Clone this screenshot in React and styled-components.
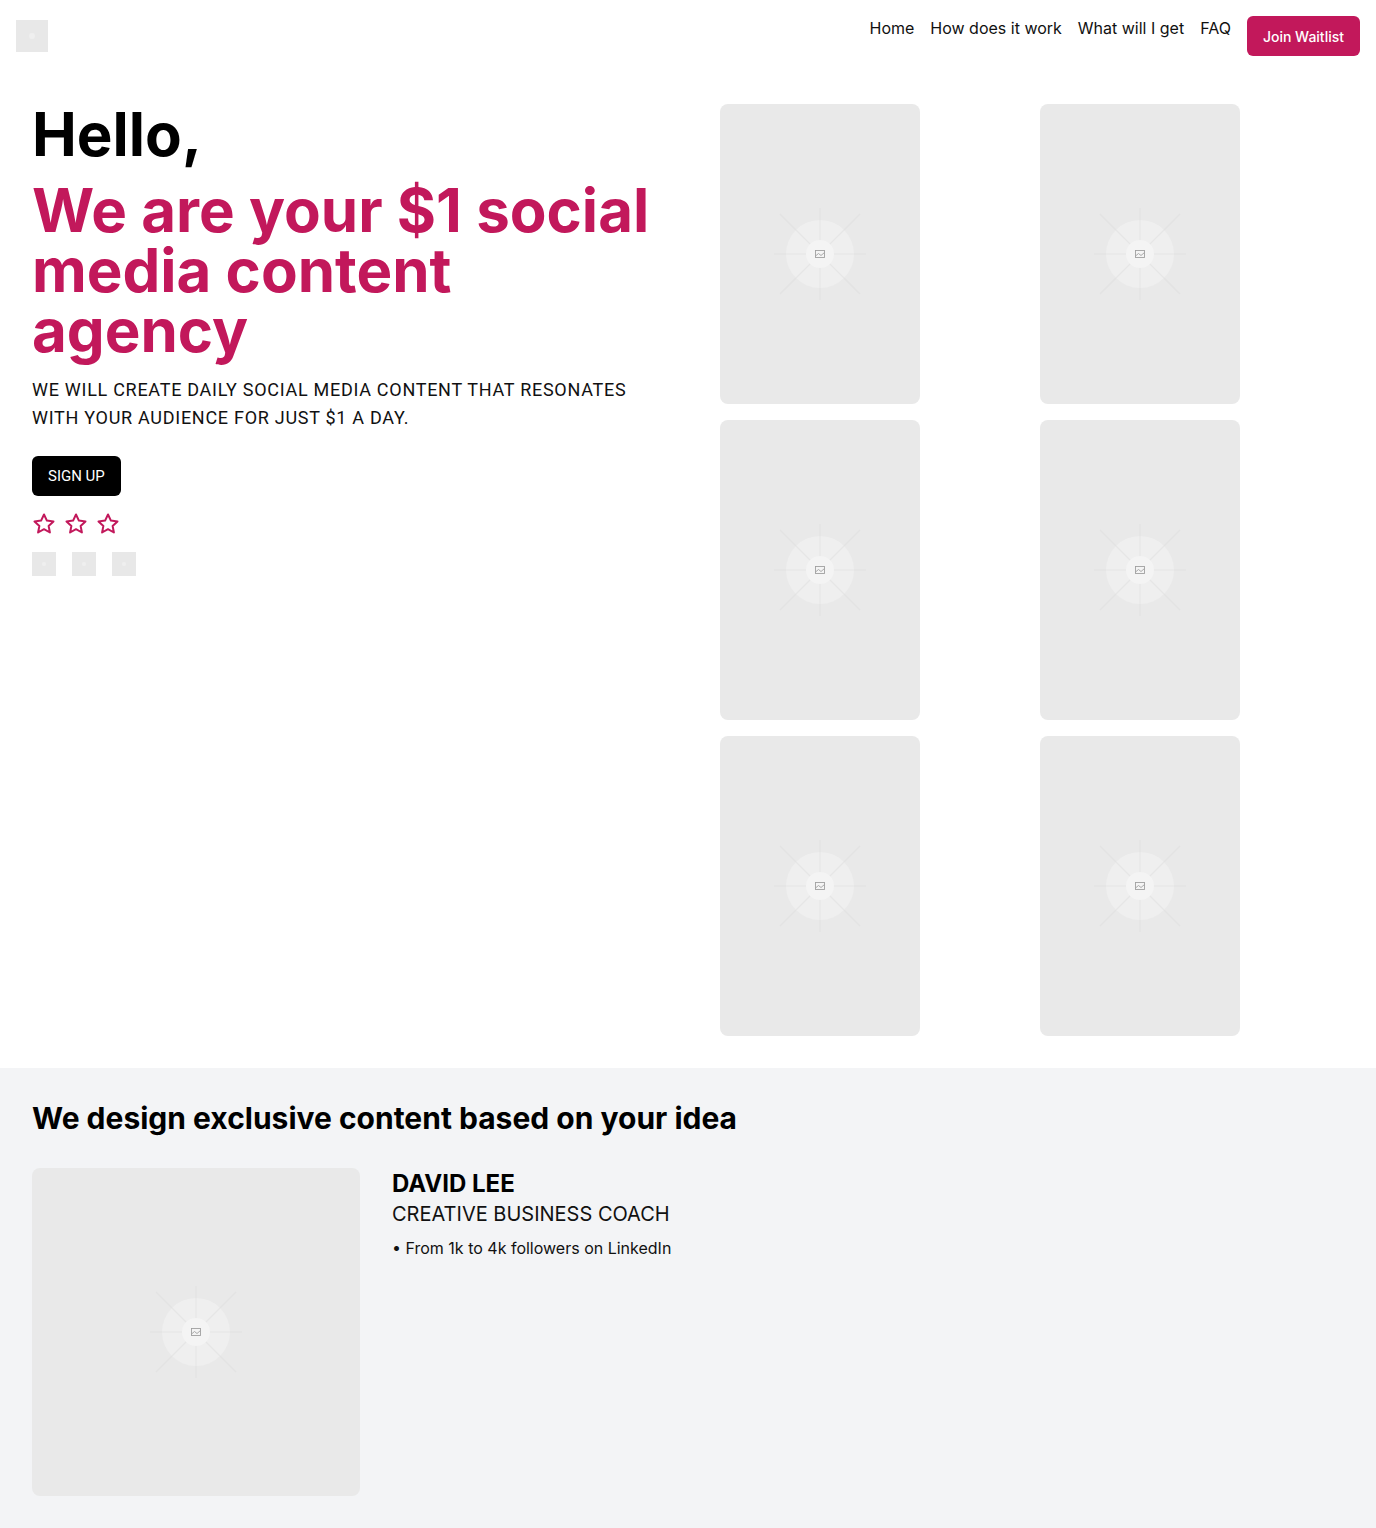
import React from "react";
import styled, { createGlobalStyle } from "styled-components";

const Global = createGlobalStyle`
  * { box-sizing: border-box; }
  html, body { margin: 0; padding: 0; background: #fff; }
  body { font-family: Inter, "Noto Sans", sans-serif; color: #111; }
`;

const PINK = "#C2185B";

const Page = styled.div`
  width: 1376px;
  min-height: 1528px;
  display: flex;
  flex-direction: column;
`;

const Nav = styled.header`
  height: 72px;
  padding: 16px;
  display: flex;
  justify-content: space-between;
  align-items: flex-start;
`;

const Logo = styled.div`
  width: 32px;
  height: 32px;
  margin-top: 4px;
  background: #e8e8e8;
  display: flex;
  align-items: center;
  justify-content: center;
  &::after {
    content: "";
    width: 6px;
    height: 6px;
    border-radius: 50%;
    background: #efefef;
  }
`;

const NavRight = styled.nav`
  display: flex;
  align-items: flex-start;
  gap: 16px;
`;

const NavLink = styled.a`
  font-size: 16px;
  line-height: 24px;
  color: #111;
  text-decoration: none;
`;

const PinkButton = styled.button`
  height: 40px;
  padding: 0 16px;
  border: none;
  border-radius: 6px;
  background: ${PINK};
  color: #fff;
  font-family: Inter, sans-serif;
  font-size: 14px;
  font-weight: 500;
`;

const Hero = styled.section`
  display: grid;
  grid-template-columns: 640px 1fr;
  column-gap: 48px;
  padding: 32px;
`;

const Left = styled.div`
  display: flex;
  flex-direction: column;
  align-items: flex-start;
`;

const Hello = styled.h1`
  margin: 0;
  font-size: 60px;
  line-height: 60px;
  font-weight: 700;
  color: #000;
`;

const Headline = styled.h2`
  margin: 16px 0 0;
  max-width: 630px;
  font-size: 60px;
  line-height: 60px;
  font-weight: 700;
  color: ${PINK};
`;

const Sub = styled.p`
  margin: 16px 0 0;
  font-family: Roboto, sans-serif;
  font-size: 18px;
  line-height: 28px;
  letter-spacing: 0.04em;
  color: #111;
  max-width: 630px;
`;

const BlackButton = styled.button`
  margin-top: 24px;
  height: 40px;
  padding: 0 16px;
  border: none;
  border-radius: 6px;
  background: #000;
  color: #fff;
  font-family: Roboto, sans-serif;
  font-size: 15px;
`;

const Stars = styled.div`
  margin-top: 16px;
  display: flex;
  gap: 8px;
`;

const Squares = styled.div`
  margin-top: 16px;
  display: flex;
  gap: 16px;
`;

const Square = styled.div`
  width: 24px;
  height: 24px;
  background: #e8e8e8;
  display: flex;
  align-items: center;
  justify-content: center;
  &::after {
    content: "";
    width: 4px;
    height: 4px;
    border-radius: 50%;
    background: #efefef;
  }
`;

const ImageGrid = styled.div`
  display: grid;
  grid-template-columns: repeat(2, 200px);
  grid-auto-rows: 300px;
  column-gap: 120px;
  row-gap: 16px;
`;

const Card = styled.div`
  width: ${(p) => p.$w}px;
  height: ${(p) => p.$h}px;
  border-radius: 8px;
  background: #e9e9e9;
  display: flex;
  align-items: center;
  justify-content: center;
  overflow: hidden;
`;

const Section = styled.section`
  flex: 1;
  background: #f3f4f6;
  padding: 32px;
`;

const SectionTitle = styled.h2`
  margin: 0;
  font-size: 30px;
  line-height: 36px;
  font-weight: 700;
  color: #000;
`;

const Profile = styled.div`
  margin-top: 32px;
  display: flex;
  gap: 32px;
  align-items: flex-start;
`;

const Info = styled.div`
  display: flex;
  flex-direction: column;
`;

const Name = styled.div`
  font-size: 24px;
  line-height: 32px;
  font-weight: 700;
  color: #000;
`;

const Role = styled.div`
  font-size: 20px;
  line-height: 28px;
  color: #111;
`;

const Bullets = styled.ul`
  margin: 8px 0 0;
  padding: 0;
  list-style: none;
  font-size: 16px;
  line-height: 24px;
  color: #111;
`;

const Placeholder = ({ w, h }) => (
  <Card $w={w} $h={h}>
    <svg width="120" height="120" viewBox="-60 -60 120 120">
      <g stroke="#e3e3e3" strokeWidth="1.5">
        <line x1="0" y1="-46" x2="0" y2="46" />
        <line x1="-46" y1="0" x2="46" y2="0" />
        <line x1="-40" y1="-40" x2="40" y2="40" />
        <line x1="40" y1="-40" x2="-40" y2="40" />
      </g>
      <circle r="34" fill="#efefef" />
      <g stroke="#e6e6e6" strokeWidth="1.2">
        <line x1="0" y1="-34" x2="0" y2="34" />
        <line x1="-34" y1="0" x2="34" y2="0" />
        <line x1="-24" y1="-24" x2="24" y2="24" />
        <line x1="24" y1="-24" x2="-24" y2="24" />
      </g>
      <circle r="14" fill="#f4f4f4" />
      <g fill="none" stroke="#a0a0a0" strokeWidth="0.9">
        <rect x="-4.5" y="-3.5" width="9" height="7" />
        <polyline points="-4.5,2 -1.5,-0.5 1,1.5 4.5,-1.5" />
      </g>
    </svg>
  </Card>
);

const Star = () => (
  <svg width="24" height="24" viewBox="0 0 24 24" fill="none" stroke={PINK} strokeWidth="2" strokeLinejoin="round">
    <polygon points="12,2.5 14.9,8.6 21.5,9.4 16.6,13.9 17.9,20.5 12,17.2 6.1,20.5 7.4,13.9 2.5,9.4 9.1,8.6" />
  </svg>
);

export default function App() {
  return (
    <Page>
      <Global />
      <Nav>
        <Logo />
        <NavRight>
          <NavLink href="#">Home</NavLink>
          <NavLink href="#">How does it work</NavLink>
          <NavLink href="#">What will I get</NavLink>
          <NavLink href="#">FAQ</NavLink>
          <PinkButton>Join Waitlist</PinkButton>
        </NavRight>
      </Nav>
      <Hero>
        <Left>
          <Hello>Hello,</Hello>
          <Headline>We are your $1 social media content agency</Headline>
          <Sub>
            WE WILL CREATE DAILY SOCIAL MEDIA CONTENT THAT RESONATES WITH YOUR AUDIENCE FOR JUST $1 A DAY.
          </Sub>
          <BlackButton>SIGN UP</BlackButton>
          <Stars>
            <Star />
            <Star />
            <Star />
          </Stars>
          <Squares>
            <Square />
            <Square />
            <Square />
          </Squares>
        </Left>
        <ImageGrid>
          {[0, 1, 2, 3, 4, 5].map((i) => (
            <Placeholder key={i} w={200} h={300} />
          ))}
        </ImageGrid>
      </Hero>
      <Section>
        <SectionTitle>We design exclusive content based on your idea</SectionTitle>
        <Profile>
          <Placeholder w={328} h={328} />
          <Info>
            <Name>DAVID LEE</Name>
            <Role>CREATIVE BUSINESS COACH</Role>
            <Bullets>
              <li>• From 1k to 4k followers on LinkedIn</li>
            </Bullets>
          </Info>
        </Profile>
      </Section>
    </Page>
  );
}
